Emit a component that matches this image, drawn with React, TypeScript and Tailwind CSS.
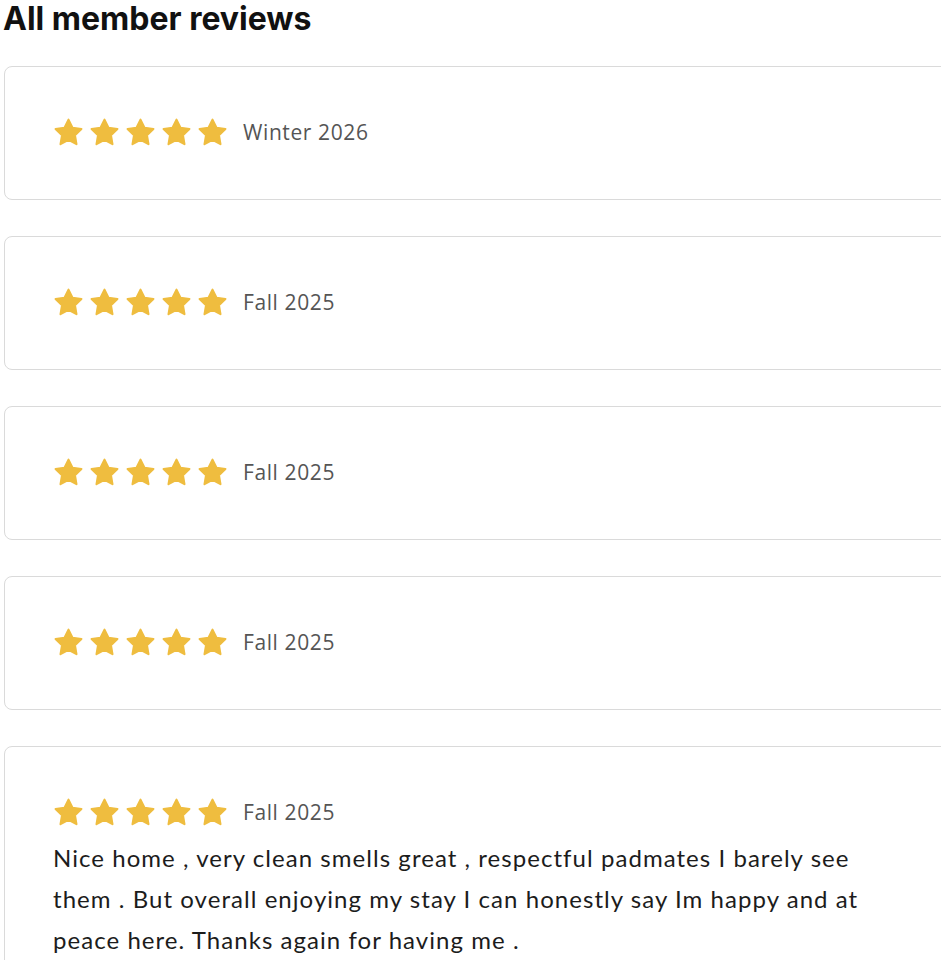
const REVIEWS = [
  { id: 1, term: "Winter 2026", text: "" },
  { id: 2, term: "Fall 2025", text: "" },
  { id: 3, term: "Fall 2025", text: "" },
  { id: 4, term: "Fall 2025", text: "" },
  {
    id: 5,
    term: "Fall 2025",
    text: "Nice home , very clean smells great , respectful padmates I barely see them . But overall enjoying my stay I can honestly say Im happy and at peace here. Thanks again for having me .",
  },
];

function StarIcon() {
  return (
    <svg viewBox="0 0 24 24" className="w-[31px] h-[31px]">
      <polygon
        points="12,2 15.09,8.26 22,9.27 17,14.14 18.18,21.02 12,17.77 5.82,21.02 7,14.14 2,9.27 8.91,8.26"
        fill="#efbd3f"
        stroke="#efbd3f"
        strokeWidth={1.6}
        strokeLinejoin="round"
      />
    </svg>
  );
}

export default function App() {
  return (
    <div className="w-[941px] h-[960px] overflow-hidden bg-white">
      <h1 className="font-['Inter',sans-serif] font-bold text-[32px] leading-[38px] text-[#111] pl-[3px]">
        All member reviews
      </h1>
      <div className="flex flex-col gap-[36.5px] pl-1 mt-[28px] w-[1000px]">
        {REVIEWS.map((r) => (
          <div
            key={r.id}
            className={`border border-[#dadada] rounded-[8px] pl-[48px] pt-[50px] ${
              r.text ? "pb-10" : "pb-[50px]"
            }`}
          >
            <div className="flex items-center">
              <div className="flex items-center gap-[5px]">
                {[0, 1, 2, 3, 4].map((i) => (
                  <StarIcon key={i} />
                ))}
              </div>
              <span className="ml-[15px] font-['Open_Sans',sans-serif] text-[21px] tracking-[0.6px] text-[#555]">
                {r.term}
              </span>
            </div>
            {r.text && (
              <p className="font-['Lato',sans-serif] text-[24px] tracking-[1.05px] leading-[41px] text-[#1c1c1c] mt-[8px] w-[822px]">
                {r.text}
              </p>
            )}
          </div>
        ))}
      </div>
    </div>
  );
}
